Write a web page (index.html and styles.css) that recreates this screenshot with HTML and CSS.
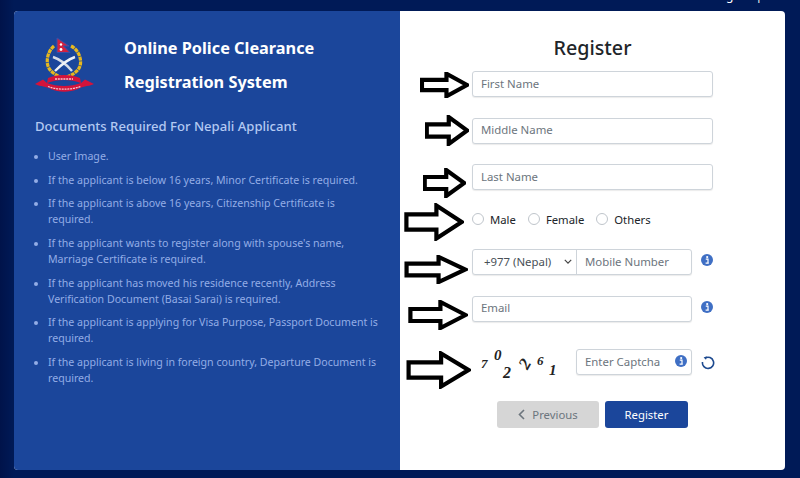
FILE: index.html
```html
<!DOCTYPE html>
<html lang="en">
<head>
<meta charset="utf-8">
<title>Register</title>
<link rel="stylesheet" href="styles.css">
</head>
<body>
<span class="top-clip">g |</span>
<main class="card">
  <section class="info">
    <header class="brand">
      <svg class="logo" viewBox="0 0 60 56" width="60" height="56" aria-hidden="true">
        <path d="M19 9 C13 14 11 23 13 29 C15 35 21 38 27 41" fill="none" stroke="#e7b81e" stroke-width="3.2" stroke-dasharray="4 .7"/>
        <path d="M36 9 C44 13 47 23 45 29 C43 35 37 38 30 41" fill="none" stroke="#e7b81e" stroke-width="3.2" stroke-dasharray="4 .7"/>
        <path d="M22 1 L34 9 L28.5 9 L35 15.5 L22 15.5 Z" fill="#d3213f" stroke="#3b4fa8" stroke-width="1"/>
        <circle cx="26" cy="7.5" r="1.2" fill="#fff"/><circle cx="26" cy="12.5" r="1.4" fill="#fff"/>
        <path d="M18 20 C24 22 32 28 37 34" fill="none" stroke="#d5dbe6" stroke-width="2.4"/>
        <path d="M40 20 C34 22 26 28 20 34" fill="none" stroke="#eef1f6" stroke-width="2.4"/>
        <path d="M13 41 C22 37 36 37 45 41 L46 46 C36 42 22 42 12 46 Z" fill="#d3133b"/>
        <path d="M0 47 L8 42.5 L12 46 C22 50 36 50 46 46 L50 42.5 L59 47 C52 50 47 49 43 52 C34 55.5 24 55.5 16 52 C11 49 6 50 0 47 Z" fill="#d3133b"/>
        <path d="M20 42 H38" stroke="#f3c9cf" stroke-width="1.5" stroke-dasharray="2 .8"/>
        <path d="M13 49.5 C22 53 36 53 46 49.5" fill="none" stroke="#f3c9cf" stroke-width="1.3" stroke-dasharray="2 .8"/>
      </svg>
      <h1 class="brand-title">Online Police Clearance<br>Registration System</h1>
    </header>
    <h2 class="docs-title">Documents Required For Nepali Applicant</h2>
    <ul class="docs">
      <li>User Image.</li>
      <li>If the applicant is below 16 years, Minor Certificate is required.</li>
      <li>If the applicant is above 16 years, Citizenship Certificate is required.</li>
      <li>If the applicant wants to register along with spouse's name, Marriage Certificate is required.</li>
      <li>If the applicant has moved his residence recently, Address Verification Document (Basai Sarai) is required.</li>
      <li>If the applicant is applying for Visa Purpose, Passport Document is required.</li>
      <li>If the applicant is living in foreign country, Departure Document is required.</li>
    </ul>
  </section>
  <section class="form-pane">
    <h2 class="form-title">Register</h2>
    <form class="form">
      <input class="field first" type="text" placeholder="First Name">
      <input class="field middle" type="text" placeholder="Middle Name">
      <input class="field last" type="text" placeholder="Last Name">
      <div class="gender">
        <label class="radio"><input type="radio" name="g"><span>Male</span></label>
        <label class="radio"><input type="radio" name="g"><span>Female</span></label>
        <label class="radio"><input type="radio" name="g"><span>Others</span></label>
      </div>
      <div class="row phone-row">
        <div class="phone">
          <div class="code">+977 (Nepal)
            <svg viewBox="0 0 10 6" width="8" height="5" aria-hidden="true"><path d="M1 1 L5 5 L9 1" fill="none" stroke="#444" stroke-width="1.5"/></svg>
          </div>
          <input class="phone-input" type="text" placeholder="Mobile Number">
        </div>
        <svg class="info-ico" viewBox="0 0 12 12" width="12" height="12" aria-hidden="true"><circle cx="6" cy="6" r="6" fill="#3f6fc4"/><circle cx="6.2" cy="3.1" r="1.1" fill="#fff"/><path d="M4.8 5.2 H7 V9 H7.8 M4.6 9.2 H7.8" fill="none" stroke="#fff" stroke-width="1.2"/></svg>
      </div>
      <div class="row email-row">
        <input class="field email" type="text" placeholder="Email">
        <svg class="info-ico" viewBox="0 0 12 12" width="12" height="12" aria-hidden="true"><circle cx="6" cy="6" r="6" fill="#3f6fc4"/><circle cx="6.2" cy="3.1" r="1.1" fill="#fff"/><path d="M4.8 5.2 H7 V9 H7.8 M4.6 9.2 H7.8" fill="none" stroke="#fff" stroke-width="1.2"/></svg>
      </div>
      <div class="row captcha-row">
        <div class="captcha-img" aria-label="captcha">
          <span class="d d1">7</span><span class="d d2">0</span><span class="d d3">2</span><span class="d d4">2</span><span class="d d5">6</span><span class="d d6">1</span>
        </div>
        <div class="captcha-box">
          <span class="captcha-ph">Enter Captcha</span>
          <svg viewBox="0 0 12 12" width="12" height="12" aria-hidden="true"><circle cx="6" cy="6" r="6" fill="#3f6fc4"/><circle cx="6.2" cy="3.1" r="1.1" fill="#fff"/><path d="M4.8 5.2 H7 V9 H7.8 M4.6 9.2 H7.8" fill="none" stroke="#fff" stroke-width="1.2"/></svg>
        </div>
        <svg class="refresh" viewBox="0 0 14 14" width="14" height="14" aria-hidden="true"><path d="M4.2 2 A5.6 5.6 0 1 1 1.5 6" fill="none" stroke="#1d4a8f" stroke-width="1.6"/><path d="M5.8 .2 L2.6 1.4 L5 3.8 Z" fill="#1d4a8f"/></svg>
      </div>
      <div class="actions">
        <button class="btn prev" type="button">
          <svg viewBox="0 0 7 11" width="7" height="11" aria-hidden="true"><path d="M6 1 L1.5 5.5 L6 10" fill="none" stroke="#6c757d" stroke-width="1.6"/></svg>
          Previous
        </button>
        <button class="btn submit" type="button">Register</button>
      </div>
    </form>
  </section>
</main>
<svg class="arrow a1" viewBox="0 0 50 30" preserveAspectRatio="none" aria-hidden="true"><path vector-effect="non-scaling-stroke" d="M2 9 H27 V2 L48 15 L27 28 V21 H2 Z"/></svg>
<svg class="arrow a2" viewBox="0 0 50 30" preserveAspectRatio="none" aria-hidden="true"><path vector-effect="non-scaling-stroke" d="M2 9 H27 V2 L48 15 L27 28 V21 H2 Z"/></svg>
<svg class="arrow a3" viewBox="0 0 50 30" preserveAspectRatio="none" aria-hidden="true"><path vector-effect="non-scaling-stroke" d="M2 9 H27 V2 L48 15 L27 28 V21 H2 Z"/></svg>
<svg class="arrow a4" viewBox="0 0 50 30" preserveAspectRatio="none" aria-hidden="true"><path vector-effect="non-scaling-stroke" d="M2 9 H27 V2 L48 15 L27 28 V21 H2 Z"/></svg>
<svg class="arrow a5" viewBox="0 0 50 30" preserveAspectRatio="none" aria-hidden="true"><path vector-effect="non-scaling-stroke" d="M2 9 H27 V2 L48 15 L27 28 V21 H2 Z"/></svg>
<svg class="arrow a6" viewBox="0 0 50 30" preserveAspectRatio="none" aria-hidden="true"><path vector-effect="non-scaling-stroke" d="M2 9 H27 V2 L48 15 L27 28 V21 H2 Z"/></svg>
<svg class="arrow a7" viewBox="0 0 50 30" preserveAspectRatio="none" aria-hidden="true"><path vector-effect="non-scaling-stroke" d="M2 9 H27 V2 L48 15 L27 28 V21 H2 Z"/></svg>
</body>
</html>
```
FILE: styles.css
```css
* { box-sizing: border-box; }
html, body { height: 100%; }
body {
  margin: 0;
  padding: 11px 15px 8px 14px;
  background: linear-gradient(90deg, #00134a 0, #001a57 14px);
  font-family: "Noto Sans", sans-serif;
  overflow: hidden;
  position: relative;
}
.top-clip {
  position: absolute;
  left: 726px;
  top: -13px;
  color: #fff;
  font-size: 12px;
  word-spacing: 19px;
}
.card {
  display: flex;
  height: 459px;
  border-radius: 4px;
  overflow: hidden;
  background: #fff;
}
.info {
  width: 386px;
  flex: none;
  background: #1b469b;
  padding: 26px 20px 0 21px;
}
.brand { display: flex; align-items: flex-start; }
.logo { flex: none; display: block; }
.brand-title {
  margin: -6px 0 0 29px;
  color: #fff;
  font-size: 16.3px;
  font-weight: 700;
  line-height: 34px;
}
.docs-title {
  margin: 17px 0 0;
  color: #b3c9f2;
  font-size: 13.1px;
  font-weight: 500;
  line-height: 20px;
}
.docs {
  margin: 12px 0 0;
  padding: 0 0 0 13px;
  color: #93ade6;
  font-size: 10.6px;
  line-height: 16px;
}
.docs li { margin-bottom: 7.7px; }
.docs li::marker { font-size: 10px; }
.form-pane {
  flex: 1;
  display: flex;
  flex-direction: column;
  align-items: center;
  padding-top: 24px;
}
.form-title {
  margin: 0;
  color: #212529;
  font-size: 19.7px;
  font-weight: 500;
  line-height: 26px;
}
.form {
  width: 241px;
  margin: 10px 0 0;
  display: flex;
  flex-direction: column;
}
.field, .phone, .captcha-box {
  height: 26px;
  border: 1px solid #ced4da;
  border-radius: 3px;
  background: #fff;
  box-shadow: 0 1px 1px rgba(0,0,0,.08);
}
.field {
  width: 100%;
  padding: 0 8px 2px;
  font: 11.4px "Noto Sans", sans-serif;
  outline: none;
}
input::placeholder { color: #6c757d; opacity: 1; }
.middle { margin-top: 21px; padding-bottom: 4px; }
.last { margin-top: 20px; }
.gender {
  display: flex;
  align-items: center;
  height: 16px;
  margin-top: 21px;
  gap: 12px;
}
.radio {
  display: flex;
  align-items: center;
  gap: 6px;
  font-size: 11.3px;
  color: #212529;
}
.radio input {
  appearance: none;
  width: 12px;
  height: 12px;
  margin: 0;
  border: 1px solid #bfc5cb;
  border-radius: 50%;
  background: #fff;
}
.row { display: flex; align-items: center; }
.phone-row { margin-top: 22px; }
.email-row { margin-top: 21px; }
.captcha-row { margin-top: 27px; height: 26px; }
.phone {
  width: 220px;
  display: flex;
  flex: none;
}
.code {
  width: 104px;
  flex: none;
  display: flex;
  align-items: center;
  justify-content: space-between;
  padding: 0 4px 2px 11px;
  font-size: 11.4px;
  color: #495057;
  border-right: 1px solid #ced4da;
}
.phone-input {
  flex: 1;
  min-width: 0;
  border: 0;
  padding: 0 8px 2px;
  background: transparent;
  font: 11.4px "Noto Sans", sans-serif;
  outline: none;
}
.email { width: 220px; flex: none; padding-bottom: 4px; }
.info-ico { margin: -4px 0 0 9px; flex: none; }
.captcha-img {
  width: 104px;
  flex: none;
  height: 26px;
  position: relative;
  font: italic 700 13px "Liberation Serif", serif;
  color: #222;
}
.d { position: absolute; }
.d1 { left: 9px; top: 7px; }
.d2 { left: 22px; top: -2px; font-size: 15px; }
.d3 { left: 31px; top: 15px; font-size: 16px; }
.d4 { left: 49px; top: 5px; transform: rotate(-60deg); font-size: 17px; }
.d5 { left: 65px; top: 4px; }
.d6 { left: 77px; top: 13px; font-size: 15px; }
.captcha-box {
  width: 116px;
  flex: none;
  display: flex;
  align-items: center;
  justify-content: space-between;
  padding: 0 4px 2px 8px;
}
.captcha-ph { font-size: 11.4px; color: #6c757d; }
.refresh { margin: 2px 0 0 9px; flex: none; }
.actions {
  display: flex;
  justify-content: center;
  gap: 6px;
  margin-top: 26px;
}
.btn {
  height: 27px;
  border: 0;
  border-radius: 3px;
  font: 11.3px "Noto Sans", sans-serif;
  display: flex;
  align-items: center;
  justify-content: center;
}
.prev { width: 102px; background: #d6d6d6; color: #6c757d; gap: 7px; }
.submit { width: 83px; background: #1b469b; color: #fff; }
.arrow {
  position: absolute;
  fill: #fff;
  stroke: #000;
  stroke-width: 4.2;
  stroke-linejoin: miter;
}
.a1 { left: 420px; top: 72px; width: 49px; height: 26px; }
.a2 { left: 425px; top: 115px; width: 44px; height: 31px; }
.a3 { left: 423px; top: 168px; width: 43px; height: 30px; }
.a4 { left: 404px; top: 203px; width: 60px; height: 38px; }
.a5 { left: 404px; top: 255px; width: 64px; height: 29px; }
.a6 { left: 408px; top: 300px; width: 60px; height: 30px; }
.a7 { left: 406px; top: 351px; width: 65px; height: 38px; }
```
